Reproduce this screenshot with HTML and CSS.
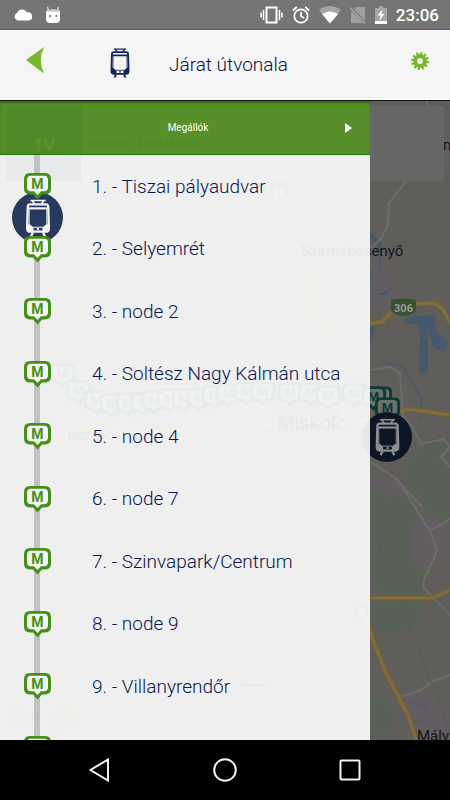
FILE: index.html
```html
<!DOCTYPE html>
<html lang="hu">
<head>
<meta charset="utf-8">
<meta name="viewport" content="width=device-width, initial-scale=1">
<title>Járat útvonala</title>
<link rel="stylesheet" href="styles.css">
</head>
<body>
<svg class="sprite" aria-hidden="true">
  <symbol id="tram" viewBox="0 0 20 30">
    <g fill="none" stroke="currentColor">
      <path d="M4 1.200h12M5 1l2.500 3M15 1l-2.500 3" stroke-width="1.200"/>
      <path d="M3.700 4.200h12.600q1.700 0 1.800 2l.5 17q0 2.600-2.500 2.600H3.900q-2.500 0-2.500-2.600l.5-17q.1-2 1.800-2z" stroke-width="1.800"/>
      <path d="M2 7.400h16" stroke-width="1.700"/>
      <path d="M3 8v12l2.500 2.300h9L17 20V8" stroke-width=".8"/>
      <path d="M6 26.500l-1.500 3M14 26.500l1.500 3" stroke-width="1.800"/>
    </g>
    <path d="M2 19.500l4.500 3.500v2.500H3L2 24zM18 19.500L13.500 23v2.500H17l1-1.500z" fill="currentColor"/>
    <circle cx="10" cy="23.800" r=".9" fill="currentColor"/>
  </symbol>
  <symbol id="stop" viewBox="0 0 27 27">
    <path d="M6 0h15q6 0 6 6v10q0 5-6 5.500h-3L13.500 26.500 9 21.500H6Q0 21 0 16V6Q0 0 6 0z" fill="currentColor"/>
    <path d="M7 2.800h13q4 0 4 4v7.500q0 4-4 4h-3L13.500 22 10 18.300H7q-4 0-4-4V6.800q0-4 4-4z" class="stop-face"/>
    <text x="13.500" y="16" class="stop-letter">M</text>
  </symbol>
</svg>

<div class="screen">
  <div class="status">
    <svg class="s-cloud" viewBox="0 0 20 12"><path d="M4.500 11.500a4 4 0 0 1-.5-7.500A5.500 5.500 0 0 1 14 3.500a4 4 0 0 1 2 8z" fill="#fff"/></svg>
    <svg class="s-droid" viewBox="0 0 16 18"><path d="M3.500 5L2.500 1M12.500 5l1-4" stroke="#ddd" stroke-width="1.300"/><path d="M1 5q7-3 14 0v8q0 4-4 4H5q-4 0-4-4z" fill="#fff"/><path d="M1 4.800q7-2.500 14 0v1H1z" fill="#ccc"/><path d="M4 9h2v2H4zM10.500 9h2v2h-2z" fill="#888"/></svg>
    <span class="status-right">
      <svg width="23" height="18" viewBox="0 0 23 18" fill="none" stroke="#fff" stroke-width="1.500"><rect x="6.500" y="1.500" width="10" height="15" stroke-width="2"/><path d="M3.500 4v10M1 6.500v5M19.500 4v10M22 6.500v5"/></svg>
      <svg width="18" height="18" viewBox="0 0 18 18" fill="none" stroke="#fff" stroke-width="1.700"><circle cx="9" cy="10" r="6.700"/><path d="M9 6v4.200l3 1.800M.8 4.500L4.800 1M17.200 4.500L13.200 1"/></svg>
      <svg width="22" height="18" viewBox="0 0 22 18"><path d="M0 4Q11-4 22 4L11 17.500z" fill="#a5a5a5"/><path d="M3 8q8-5 16 0l-8 9.500z" fill="#fff"/></svg>
      <svg width="16" height="18" viewBox="0 0 16 18"><path d="M6 1h9v16H1V6z" fill="#a0a0a0"/><path d="M0 1l15 16" stroke="#757575" stroke-width="3"/><path d="M0 1.500l15 16" stroke="#aaa" stroke-width="1.300"/></svg>
      <svg width="12" height="18" viewBox="0 0 12 18"><path d="M4 0h4v2h4v16H0V2h4z" fill="#a5a5a5"/><path d="M0 15h12v3H0zM7.500 3.500L2.500 9.500h3l-1 5 5-6.500h-3z" fill="#fff"/></svg>
      <time>23:06</time>
    </span>
  </div>

  <header class="appbar">
    <button class="icon-btn back" aria-label="Vissza"><svg width="18" height="27" viewBox="0 0 18 27"><path d="M18 0Q11.500 13 18 26.500L0 13z" fill="#76b82a"/></svg></button>
    <svg class="appbar-tram" width="20" height="30"><use href="#tram"/></svg>
    <h1>Járat útvonala</h1>
    <button class="icon-btn gear" aria-label="Beállítások"><svg width="18" height="18" viewBox="-9 -9 18 18"><circle r="4.900" fill="none" stroke="#76b82a" stroke-width="4"/><circle r="7.600" fill="none" stroke="#76b82a" stroke-width="2.800" stroke-dasharray="2.100 1.879"/></svg></button>
  </header>

  <main class="stage">
    <svg class="map" viewBox="0 100 450 640" preserveAspectRatio="xMinYMin slice">
      <path d="M0 100h450v640H0z" fill="#605e5b"/>
      <g fill="#596156">
        <path d="M370 480l30-2 18 30 10 20-20 10-38-10zM400 480l15-28 20-14 15 12v80l-14-2-20-34zM372 528l40 8 12 35-4 50-20 14-30-3zM435 540l15-14v34l-15-4zM370 690l20 12 5 24-25 14zM438 333l8 8-3-14 7-12v25z"/>
        <path d="M0 300h60v60H0zM0 640h60l30 100H0z"/>
      </g>
      <g fill="#625d61">
        <path d="M370 478h32l6 14-18 5-20-12zM415 520l20-5 15 20v20l-28 15-12-14zM405 690l30 8 15 20v22h-45zM370 585l8 5v10h-8zM435 130l15 10v30l-12-10zM370 240l20 30 14 40-34-5z"/>
      </g>
      <g fill="#46586b">
        <path d="M404 321l4-5 28-1-2 10 4 8 11 9-4 10-12-4-5-18v42l-9 1 1-40-3-10-8 1zM370 232l11 10v30l-3-25-8-9zM370 275l5-12-5 20zM376 295l17-7-8 7zM370 325l7-5-7 24z"/>
      </g>
      <path d="M386 363l16 3 9 14 10 18v22" fill="none" stroke="#46586b" stroke-width="1.500"/>
      <g fill="none" stroke="#6d6c6a" stroke-width="2">
        <path d="M426 100l3 10M407 180l-18 23-1 22-8 15-10 8M370 370l20-3 10 6 3 43 10 12 8 16 23-5 6 8-9 10 9 10M370 462l24 15 28 30M398 480l32 51 7 19-4 10-8 17-2 10 27 28M430 531l20-12M399 697l20-6 14-10 17-6"/>
      </g>
      <g fill="none" stroke="#585b5e" stroke-width="1.300"><path d="M370 522l78 205M404 702q15-5 32 22M402 717l28 7M416 694l12 18"/></g>
      <path id="road" class="road-edge" d="M300 270l12 40 10 12 20 4 40-4 12-13q22-6 40-6 10 4 16 20M222 428l140-8 48-11 40 6M370 598h62l18-8M280 200l42 120 20 50 2 100M352 570l22 73 12 30 22 42 9 27M60 405q20 30 60 28l100-5"/>
      <path class="road-fill" d="M300 270l12 40 10 12 20 4 40-4 12-13q22-6 40-6 10 4 16 20M222 428l140-8 48-11 40 6M370 598h62l18-8M280 200l42 120 20 50 2 100M352 570l22 73 12 30 22 42 9 27M60 405q20 30 60 28l100-5"/>
      <path d="M391 300q13-3 25 0v10q0 4-12.500 6-12.500-2-12.500-6z" fill="#35532d"/>
      <text x="403.500" y="312" class="road-no">306</text>
      <path d="M270 183h18v12l-9 4-9-4z" fill="#35532d"/>
      <text x="279" y="196" class="road-no">26</text>
      <path d="M354 603h15v12l-7 4-8-4z" fill="#35532d"/>
      <text x="362" y="616" class="road-no">3</text>
      <g class="place">
        <text x="301" y="256">Szirmabesenyő</text>
        <text x="443" y="150">n</text>
        <text x="417" y="741">Mály</text>
        <text x="277" y="430" class="city">Miskolc</text>
        <text x="68" y="440" class="district">DIÓSGYŐR</text>
      </g>
      <g class="map-stops">
        <use href="#stop" x="50" y="363" width="25" height="26"/><use href="#stop" x="66" y="380" width="25" height="26"/><use href="#stop" x="84" y="390" width="25" height="26"/><use href="#stop" x="100" y="393" width="25" height="26"/><use href="#stop" x="116" y="392" width="25" height="26"/><use href="#stop" x="131" y="392" width="25" height="26"/><use href="#stop" x="142" y="390" width="25" height="26"/><use href="#stop" x="157" y="388" width="25" height="26"/><use href="#stop" x="172" y="388" width="25" height="26"/><use href="#stop" x="187" y="387" width="25" height="26"/><use href="#stop" x="202" y="385" width="25" height="26"/><use href="#stop" x="216" y="383" width="25" height="26"/><use href="#stop" x="234" y="381" width="25" height="26"/><use href="#stop" x="250" y="381" width="25" height="26"/><use href="#stop" x="278" y="382" width="25" height="26"/><use href="#stop" x="298" y="382" width="25" height="26"/><use href="#stop" x="316" y="385" width="25" height="26"/><use href="#stop" x="342" y="383" width="25" height="26"/>
        <use href="#stop" x="367" y="386" width="25" height="26"/><use href="#stop" x="361" y="386" width="25" height="26"/><use href="#stop" x="375" y="397" width="25" height="26"/>
      </g>
      <circle cx="387" cy="437" r="25" fill="#0e1626"/>
      <g class="map-tram"><use href="#tram" x="375" y="418" width="25" height="38"/></g>
      <path d="M6 106h438v75H6z" fill="#666"/>
      <path d="M6 106h75v75H6z" fill="#101f33"/>
      <text x="33" y="151" class="line-no">1V</text>
      <text x="88" y="148" class="line-name">Tiszai pu. - Felső-Majláth</text>
      <path d="M242 684h26v2h-26z" fill="#101f33"/>
      <text x="8" y="725" class="brand"><tspan fill="#2b4a8a">G</tspan><tspan fill="#8a2b22">o</tspan><tspan fill="#8a6a12">o</tspan><tspan fill="#2b4a8a">g</tspan><tspan fill="#226a35">l</tspan><tspan fill="#8a2b22">e</tspan></text>
    </svg>

    <aside class="drawer">
      <button class="drawer-head"><span>Megállók</span><svg width="7" height="10" viewBox="0 0 7 10"><path d="M0 0l7 5-7 5z" fill="#fff"/></svg></button>
      <div class="route">
        <span class="vehicle"><svg width="26" height="38"><use href="#tram"/></svg></span>
        <ol>
          <li><svg><use href="#stop"/></svg><a href="#">1. - Tiszai pályaudvar</a></li>
          <li><svg><use href="#stop"/></svg><a href="#">2. - Selyemrét</a></li>
          <li><svg><use href="#stop"/></svg><a href="#">3. - node 2</a></li>
          <li><svg><use href="#stop"/></svg><a href="#">4. - Soltész Nagy Kálmán utca</a></li>
          <li><svg><use href="#stop"/></svg><a href="#">5. - node 4</a></li>
          <li><svg><use href="#stop"/></svg><a href="#">6. - node 7</a></li>
          <li><svg><use href="#stop"/></svg><a href="#">7. - Szinvapark/Centrum</a></li>
          <li><svg><use href="#stop"/></svg><a href="#">8. - node 9</a></li>
          <li><svg><use href="#stop"/></svg><a href="#">9. - Villanyrendőr</a></li>
          <li><svg><use href="#stop"/></svg></li>
        </ol>
      </div>
    </aside>
  </main>

  <nav class="navbar">
    <button class="icon-btn" aria-label="Vissza"><svg width="24" height="24" viewBox="0 0 24 24"><path d="M20 1.500v21L2.500 12z"/></svg></button>
    <button class="icon-btn" aria-label="Kezdőlap"><svg width="24" height="24" viewBox="0 0 24 24"><circle cx="12" cy="12" r="10.800"/></svg></button>
    <button class="icon-btn" aria-label="Áttekintés"><svg width="24" height="24" viewBox="0 0 24 24"><rect x="2.500" y="2.500" width="19" height="19" rx="1"/></svg></button>
  </nav>
</div>
</body>
</html>
```
FILE: styles.css
```css
* { box-sizing: border-box; }
body { margin: 0; font-family: Roboto, "Liberation Sans", sans-serif; color: #0f1f57; }
svg { display: block; }
button { border: 0; padding: 0; background: none; font: inherit; color: inherit; }
.sprite { position: absolute; width: 0; height: 0; }
.screen { display: flex; flex-direction: column; height: 100vh; overflow: hidden; }

.status { flex: none; display: flex; align-items: center; gap: 12px; height: 30px; padding: 0 11px 0 13px; background: #757575; border-bottom: 1px solid #5c5c5c; color: #fff; }
.s-cloud { width: 20px; height: 12px; }
.s-droid { width: 16px; height: 18px; }
.status-right { display: flex; align-items: center; gap: 9px; margin-left: auto; }
.status time { font-size: 17px; font-weight: 500; line-height: 20px; }

.appbar { flex: none; display: flex; align-items: center; height: 70px; padding: 0 21px 4px 16px; background: #f5f5f5; border-bottom: 1px solid #fff; color: #12265a; }
.icon-btn { display: flex; align-items: center; justify-content: center; }
.back { width: 38px; height: 44px; padding-bottom: 4px; }
.appbar-tram { margin-left: 56px; }
.appbar h1 { flex: 1; margin: 0; padding: 4px 0 0 39px; font-size: 19px; line-height: 24px; font-weight: 300; color: #0a0f40; }
.gear { padding-bottom: 4px; }

.stage { position: relative; flex: 1; display: flex; min-height: 0; overflow: hidden; border-top: 1px solid #111; background: #605e5b; }
.map { position: absolute; left: 0; top: -1px; width: 100%; height: calc(100% + 1px); }
.road-edge { fill: none; stroke: #7b5f2c; stroke-width: 5; }
.road-fill { fill: none; stroke: #7c6d45; stroke-width: 3; }
.road-no { font-size: 11px; font-weight: 700; fill: #999; text-anchor: middle; }
.place { font-size: 15px; fill: #151515; }
.city { font-size: 20px; }
.district { font-size: 11px; }
.line-no { font-size: 18px; font-weight: 700; fill: #999; }
.line-name { font-size: 10px; fill: #111; }
.brand { font-size: 22px; }
.map-stops { color: #0b3a33; --face: #6c6f6e; }
.map-tram { color: #8d8f92; }

.stop-face { fill: var(--face, #f4f6f2); }
.stop-letter { font-family: Roboto, sans-serif; font-size: 14px; font-weight: 700; text-anchor: middle; fill: currentColor; }

.drawer { position: relative; display: flex; flex-direction: column; width: 370px; max-width: 83%; overflow: hidden; }
.drawer-head { flex: none; display: grid; grid-template-columns: 1fr auto 1fr; align-items: center; height: 54px; padding: 0 18px 0 24px; background: rgba(86, 146, 38, .92); border-bottom: 1px solid #1c7a0c; box-shadow: inset 0 2px 2px rgba(20, 70, 10, .5); color: #fff; font-size: 10px; }
.drawer-head span { grid-column: 2; }
.drawer-head svg { justify-self: end; }
.route { position: relative; flex: 1; min-height: 0; background: linear-gradient(to right, transparent 34px, #c1c2c1 34px, #c1c2c1 40px, transparent 40px), rgba(255, 255, 255, .9); }
.vehicle { position: absolute; left: 12px; top: 37px; display: flex; align-items: center; justify-content: center; width: 51px; height: 51px; border-radius: 50%; background: #273a5c; color: #f5f6f8; }
.route ol { position: relative; margin: 0; padding: 0; list-style: none; }
.route li { display: grid; grid-template-columns: 27px 1fr; column-gap: 41px; align-items: center; height: 63px; padding-left: 24px; color: #468f1a; }
.route li:nth-child(even) { height: 62px; }
.route li svg { width: 27px; height: 27px; }
.route a { font-size: 19px; line-height: 24px; font-weight: 300; color: #071650; text-decoration: none; }

.navbar { flex: none; display: grid; grid-template-columns: repeat(3, 125px); justify-content: center; height: 60px; background: #000; }
.navbar svg { fill: none; stroke: #f2f2f2; stroke-width: 2; }
```
